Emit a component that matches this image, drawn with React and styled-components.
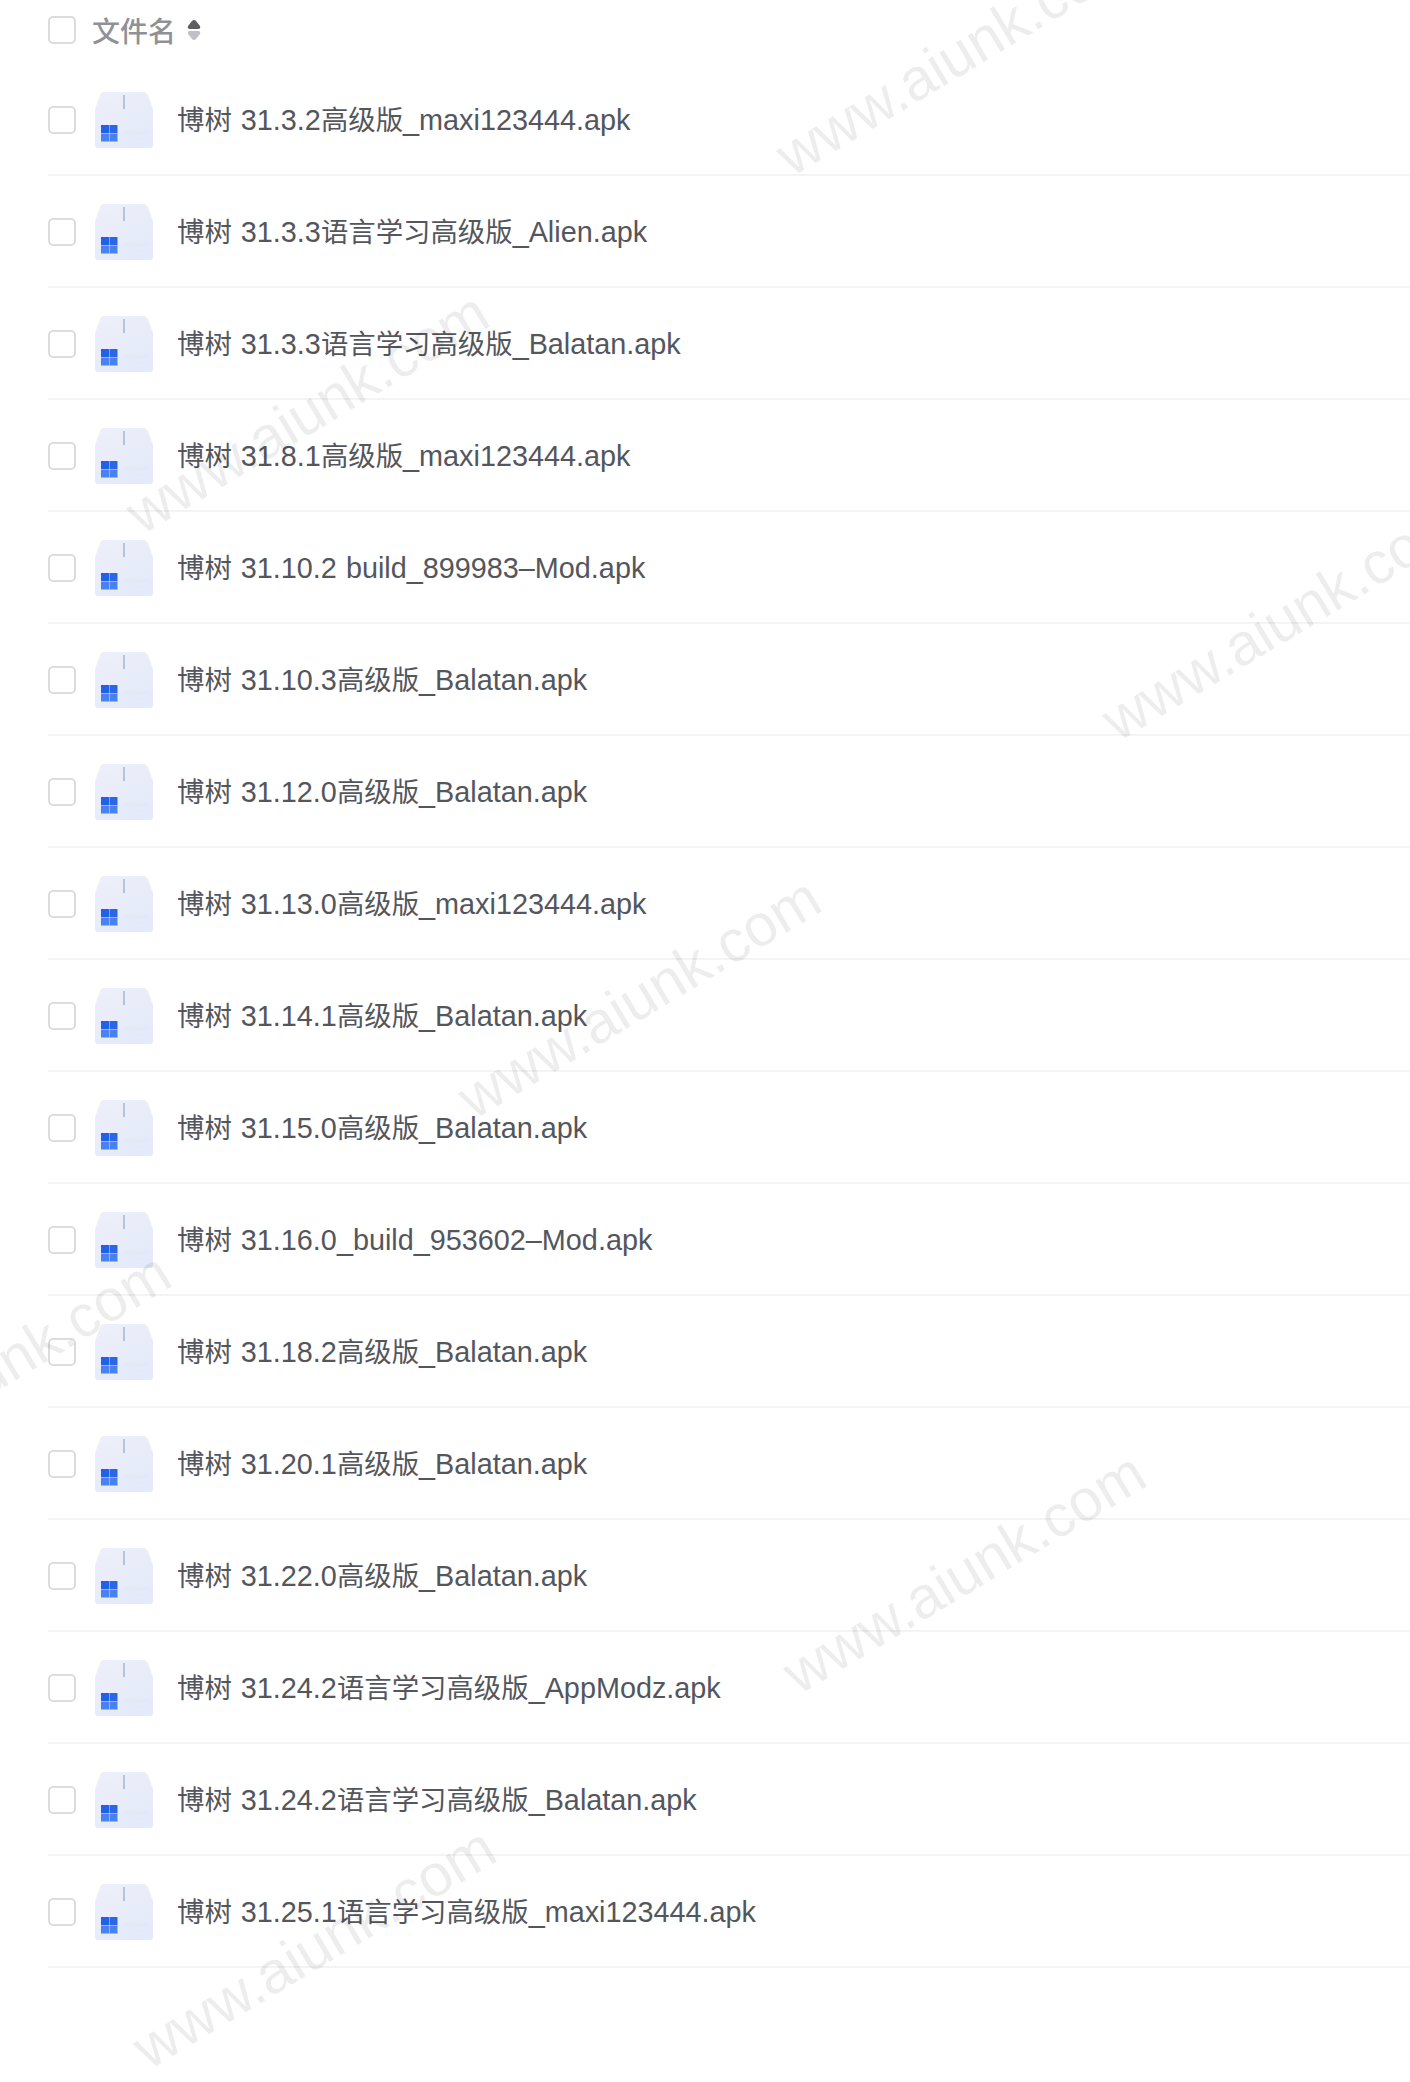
import React from 'react'
import styled, { createGlobalStyle } from 'styled-components'

const files = [
  '博树 31.3.2高级版_maxi123444.apk',
  '博树 31.3.3语言学习高级版_Alien.apk',
  '博树 31.3.3语言学习高级版_Balatan.apk',
  '博树 31.8.1高级版_maxi123444.apk',
  '博树 31.10.2 build_899983–Mod.apk',
  '博树 31.10.3高级版_Balatan.apk',
  '博树 31.12.0高级版_Balatan.apk',
  '博树 31.13.0高级版_maxi123444.apk',
  '博树 31.14.1高级版_Balatan.apk',
  '博树 31.15.0高级版_Balatan.apk',
  '博树 31.16.0_build_953602–Mod.apk',
  '博树 31.18.2高级版_Balatan.apk',
  '博树 31.20.1高级版_Balatan.apk',
  '博树 31.22.0高级版_Balatan.apk',
  '博树 31.24.2语言学习高级版_AppModz.apk',
  '博树 31.24.2语言学习高级版_Balatan.apk',
  '博树 31.25.1语言学习高级版_maxi123444.apk',
]

const marks = [
  [797, 186],
  [147, 544],
  [1123, 751],
  [479, 1129],
  [-171, 1504],
  [804, 1704],
  [154, 2079],
]

const GlobalStyle = createGlobalStyle`
  html, body {
    margin: 0;
    padding: 0;
    background: #fff;
  }
  body {
    font-family: "Liberation Sans", "Noto Sans CJK SC", sans-serif;
  }
`

const Page = styled.div`
  position: relative;
  width: 1410px;
  height: 2082px;
  overflow: hidden;
  background: #fff;
  padding-left: 48px;
  box-sizing: border-box;
`
const Header = styled.div`
  display: flex;
  align-items: center;
  height: 60px;
  margin-bottom: 4px;
`
const Checkbox = styled.span`
  display: block;
  flex: none;
  width: 28px;
  height: 28px;
  box-sizing: border-box;
  border: 2px solid #dcdcde;
  border-radius: 5px;
  background: #fff;
`
const HeaderLabel = styled.span`
  margin-left: 16px;
  font-size: 28px;
  font-weight: 500;
  color: #8f9196;
`
const SortCaret = styled.svg`
  margin-left: 11px;
  width: 14px;
  height: 22px;
`
const Row = styled.div`
  display: flex;
  align-items: center;
  height: 112px;
  padding-top: 2px;
  box-sizing: border-box;
  border-bottom: 2px solid #f4f4f5;
`
const FileThumb = styled.svg`
  flex: none;
  width: 58px;
  height: 56px;
  margin-left: 19px;
`
const FileName = styled.span`
  margin: 0 0 4px 24px;
  font-size: 28.8px;
  word-spacing: 1px;
  color: #54565d;
  white-space: nowrap;
`
const Han = styled.span`
  font-size: 27.4px;
`
const Watermark = styled.span`
  position: absolute;
  line-height: 1;
  font-size: 59px;
  color: rgba(0, 0, 0, 0.07);
  white-space: nowrap;
  transform-origin: left bottom;
  transform: rotate(-31deg);
  pointer-events: none;
`

const splitName = name =>
  name.split(/([\u4e00-\u9fff]+)/).map((part, i) =>
    i % 2 ? <Han key={i}>{part}</Han> : part
  )

const ApkIcon = ({ id }) => (
  <FileThumb viewBox="0 0 58 56">
    <defs>
      <linearGradient id={id} x1="0" y1="0" x2="0.6" y2="1">
        <stop offset="0" stopColor="#eef0f9" />
        <stop offset="1" stopColor="#e4eafa" />
      </linearGradient>
    </defs>
    <path
      d="M9 0H49Q52 0 53 3L58 17V53Q58 56 55 56H3Q0 56 0 53V17L5 3Q6 0 9 0Z"
      fill={`url(#${id})`}
    />
    <rect x="28" y="3" width="2" height="14" fill="#b4c3e0" />
    <rect x="6" y="33" width="8" height="8" fill="#2160e8" />
    <rect x="14.500" y="33" width="8" height="8" fill="#2a66ea" />
    <rect x="6" y="41.500" width="8" height="8" fill="#4a80f0" />
    <rect x="14.500" y="41.500" width="8" height="8" fill="#4a80f0" />
    <rect x="29" y="39" width="24" height="3" fill="#e4e9f5" />
    <rect x="40" y="45" width="13" height="3" fill="#e4e9f5" />
  </FileThumb>
)

const App = () => (
  <Page>
    <GlobalStyle />
    <Header>
      <Checkbox />
      <HeaderLabel>文件名</HeaderLabel>
      <SortCaret viewBox="0 0 14 22">
        <path d="M7 1Q8 1 9 2L13 7Q14 10 11 10H3Q0 10 1 7L5 2Q6 1 7 1Z" fill="#5c5e63" />
        <path d="M7 21Q8 21 9 20L13 15Q14 12 11 12H3Q0 12 1 15L5 20Q6 21 7 21Z" fill="#c0c1c4" />
      </SortCaret>
    </Header>
    {files.map((name, i) => (
      <Row key={name}>
        <Checkbox />
        <ApkIcon id={`apk-${i}`} />
        <FileName>{splitName(name)}</FileName>
      </Row>
    ))}
    {marks.map(([x, y]) => (
      <Watermark key={x} style={{ left: x, top: y - 59 }}>www.aiunk.com</Watermark>
    ))}
  </Page>
)

export default App
